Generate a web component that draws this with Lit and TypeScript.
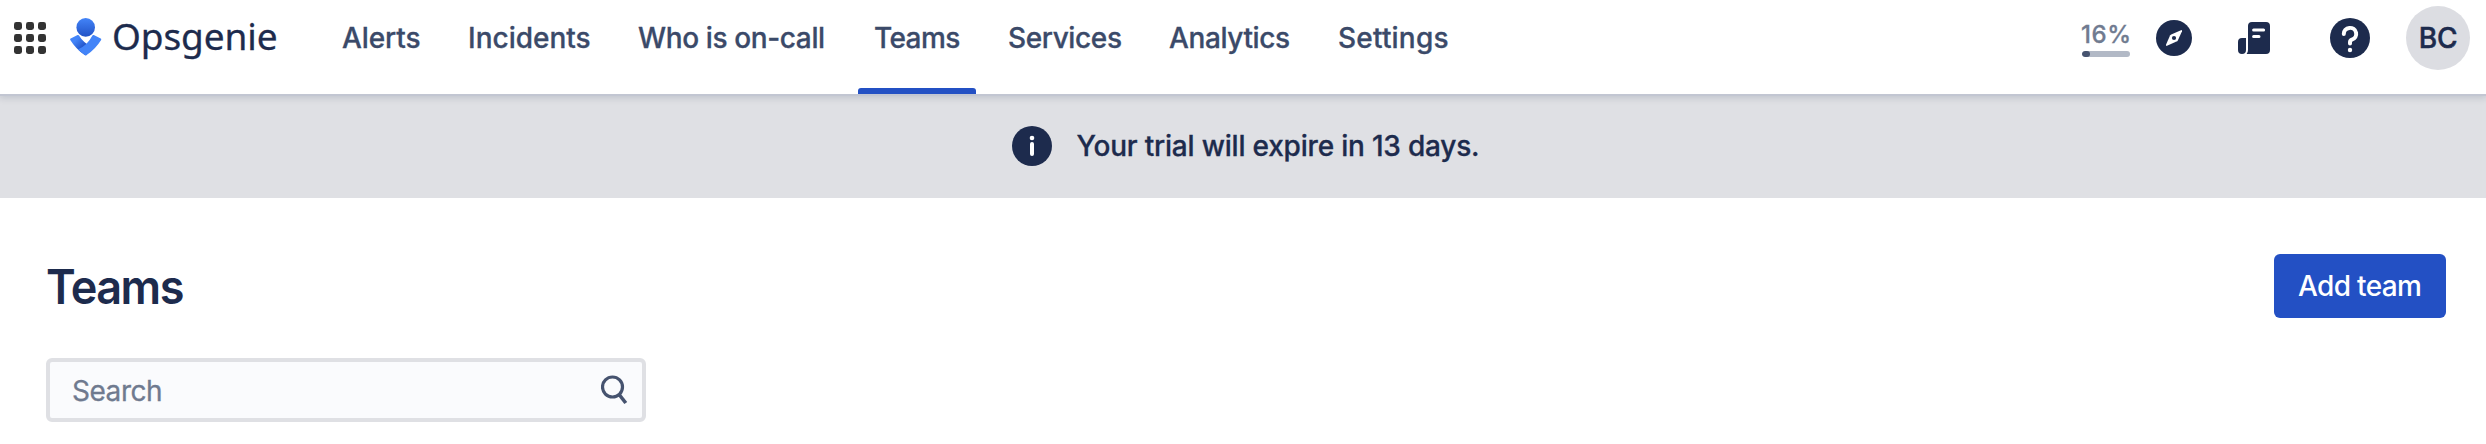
import { LitElement, html, css, svg } from "lit";
import { classMap } from "lit/directives/class-map.js";
import { styleMap } from "lit/directives/style-map.js";

interface Tab { label: string; width: number; spacing: number; active?: boolean; }

const TABS: Tab[] = [
  { label: "Alerts", width: 110, spacing: -0.09 },
  { label: "Incidents", width: 154, spacing: 0 },
  { label: "Who is on-call", width: 220, spacing: -0.38 },
  { label: "Teams", width: 118, spacing: -0.6, active: true },
  { label: "Services", width: 145, spacing: -0.38 },
  { label: "Analytics", width: 153, spacing: -0.39 },
  { label: "Settings", width: 141, spacing: 0.2 },
];

class OpsHeader extends LitElement {
  static styles = css`
    :host { display: block; }
    svg { display: block; flex: none; }
    .bar {
      box-sizing: border-box; height: 94px; display: flex; align-items: flex-start;
      background: #fff; padding: 0 16px 0 14px;
      box-shadow: 0 2px 0 #c2c6d2, 0 3px 7px 1px rgba(9, 30, 66, 0.14);
      position: relative; z-index: 1;
    }
    .brand { height: 76px; display: flex; align-items: center; width: 312px; }
    .mark { margin-left: 24px; margin-top: -3px; }
    .name { margin-left: 10px; font: 400 37px/50px "Noto Sans", sans-serif; letter-spacing: -0.1px; color: #1d2b4d; margin-top: -5px; -webkit-text-stroke: 0.3px #1d2b4d; }
    nav { display: flex; gap: 16px; }
    .tab { height: 94px; display: flex; flex-direction: column; justify-content: space-between; color: #3b4a69; -webkit-text-stroke: 0.3px #3b4a69; }
    .label { padding-left: 16px; line-height: 76px; font-weight: 500; white-space: nowrap; }
    .line { height: 6px; border-radius: 3px 3px 0 0; }
    .active .line { background: #2350c4; }
    .tools { height: 76px; margin-left: auto; display: flex; align-items: center; }
    .progress { width: 48px; margin-right: 26px; }
    .pct { font-size: 24px; line-height: 28px; font-weight: 500; letter-spacing: 0.6px; color: #707b90; margin: 2px -4px 2px -1px; -webkit-text-stroke: 0.3px #707b90; }
    .track { height: 6px; border-radius: 3px; background: #b2b9c6; overflow: hidden; }
    .fill { height: 6px; width: 16.6%; border-radius: 3px; background: #46536f; }
    .doc { margin-left: 46px; }
    .help { margin-left: 60px; }
    .avatar { margin-left: 36px; width: 64px; height: 64px; border-radius: 50%; background: #dcdde2; color: #1d2b4d; font-weight: 500; line-height: 64px; text-align: center; letter-spacing: -0.2px; -webkit-text-stroke: 0.5px #1d2b4d; }
  `;
  render() {
    return html`<header class="bar">
      <div class="brand">
        <svg width="32" height="32" viewBox="0 0 32 32" fill="#333">
          ${[0, 12, 24].map((y) => [0, 12, 24].map((x) => svg`<rect x=${x} y=${y} width="8" height="8" rx="2.4"/>`))}
        </svg>
        <svg class="mark" width="32" height="38" viewBox="0 0 32 38">
          <defs>
            <linearGradient id="head" x1="0" y1="0" x2="0" y2="1"><stop offset="0" stop-color="#4384f8"/><stop offset="1" stop-color="#2152c6"/></linearGradient>
            <linearGradient id="arm" gradientUnits="userSpaceOnUse" x1="3" y1="20" x2="13" y2="30"><stop offset="0.25" stop-color="#4384f8"/><stop offset="1" stop-color="#2152c6"/></linearGradient>
          </defs>
          <circle cx="15.7" cy="9.4" r="9.3" fill="url(#head)"/>
          <path d="M15.1 37.2 A49 49 0 0 1 .3 21.9 A1 1 0 0 1 .7 20.5 L7.6 17.1 A1.1 1.1 0 0 1 9 17.5 A27 27 0 0 0 22 28.8 A54 54 0 0 1 16.2 37.2 Z" fill="url(#arm)"/>
          <path d="M15.1 37.2 A50 50 0 0 1 7.9 31.6 A31 31 0 0 0 22.4 17.5 A1.1 1.1 0 0 1 23.8 17.1 L30.7 20.5 A1 1 0 0 1 31.1 21.9 A49 49 0 0 1 16.3 37.2 A1.2 1.2 0 0 1 15.1 37.2 Z" fill="#4384f8"/>
        </svg>
        <span class="name">Opsgenie</span>
      </div>
      <nav>
        ${TABS.map((t) => html`<div class=${classMap({ tab: true, active: !!t.active })} style=${styleMap({ width: `${t.width}px`, letterSpacing: `${t.spacing}px` })}>
          <span class="label">${t.label}</span><span class="line"></span></div>`)}
      </nav>
      <div class="tools">
        <div class="progress"><div class="pct">16%</div><div class="track"><div class="fill"></div></div></div>
        <svg width="36" height="36" viewBox="0 0 36 36">
          <circle cx="18" cy="18" r="18" fill="#1d2b4d"/>
          <path d="M25 10.2 L15.2 14.4 Q14.4 14.8 14 15.6 L10 24.8 Q9.8 26.2 11 25.8 L20.6 21.6 Q21.4 21.2 21.8 20.4 L26 11.2 Q26.2 9.8 25 10.2Z" fill="#fff"/>
          <circle cx="18" cy="18" r="2.1" fill="#1d2b4d"/>
        </svg>
        <svg class="doc" width="32" height="32" viewBox="0 0 32 32">
          <path d="M14 0 H28 A4 4 0 0 1 32 4 V28 A4 4 0 0 1 28 32 H8.6 Q10 30.4 10 28 V4 A4 4 0 0 1 14 0Z M4 16 H8 V28 A4 4 0 0 1 0 28 V20 A4 4 0 0 1 4 16Z" fill="#1d2b4d"/>
          <path d="M15.6 8 H25.6 M15.6 14.4 H21" stroke="#fff" stroke-width="3" stroke-linecap="round"/>
        </svg>
        <svg class="help" width="40" height="40" viewBox="0 0 40 40">
          <circle cx="20" cy="20" r="20" fill="#1d2b4d"/>
          <path d="M13.8 16 A6.2 6 0 1 1 21.9 21.6 Q20 22.4 20 24.2 V25.6" fill="none" stroke="#fff" stroke-width="4" stroke-linecap="round"/>
          <circle cx="20" cy="32" r="2.2" fill="#fff"/>
        </svg>
        <div class="avatar">BC</div>
      </div>
    </header>`;
  }
}
customElements.define("ops-header", OpsHeader);

class AppRoot extends LitElement {
  static styles = css`
    :host { display: block; height: 444px; background: #fff; font-family: Inter, sans-serif; font-size: 28px; color: #1d2b4d; overflow: hidden; }
    svg { display: block; flex: none; }
    .banner { height: 104px; box-sizing: border-box; padding-left: 5px; background: #dfe0e4; display: flex; justify-content: center; align-items: center; gap: 25px; }
    .msg { font-weight: 500; letter-spacing: -0.2px; white-space: nowrap; -webkit-text-stroke: 0.3px #1d2b4d; }
    main { padding: 56px 40px 0 46px; }
    .head { display: flex; justify-content: space-between; align-items: center; height: 64px; }
    h1 { margin: 2px 0 0; font-size: 48px; line-height: 58px; font-weight: 600; letter-spacing: -1.6px; transform: scaleX(0.938); transform-origin: left; }
    .add { box-sizing: border-box; width: 172px; height: 64px; border: 0; border-radius: 6px; background: #2350c4; color: #fff; font: 500 28px/64px Inter, sans-serif; letter-spacing: -0.65px; padding: 0 0 0 24px; text-align: left; }
    .search { box-sizing: border-box; width: 600px; height: 64px; margin-top: 40px; border: 4px solid #dfe0e4; border-radius: 6px; background: #fafbfd; display: flex; align-items: center; justify-content: space-between; padding: 0 14px 0 22px; color: #6f7a8f; letter-spacing: -0.47px; -webkit-text-stroke: 0.3px #6f7a8f; }
    .ph { margin-top: 2px; }
  `;
  render() {
    return html`
      <ops-header></ops-header>
      <section class="banner">
        <svg width="40" height="40" viewBox="0 0 40 40">
          <circle cx="20" cy="20" r="20" fill="#1d2b4d"/>
          <path d="M20 18 V28" stroke="#fff" stroke-width="4" stroke-linecap="round"/>
          <circle cx="20" cy="12" r="2.3" fill="#fff"/>
        </svg>
        <span class="msg">Your trial will expire in 13 days.</span>
      </section>
      <main>
        <div class="head"><h1>Teams</h1><button class="add">Add team</button></div>
        <div class="search">
          <span class="ph">Search</span>
          <svg width="27" height="30" viewBox="0 0 27 30" fill="none" stroke="#46536f">
            <circle cx="11.5" cy="12" r="10" stroke-width="3.2"/>
            <path d="M18.5 20 L24.8 28" stroke-width="3.6"/>
          </svg>
        </div>
      </main>`;
  }
}
customElements.define("app-root", AppRoot);
